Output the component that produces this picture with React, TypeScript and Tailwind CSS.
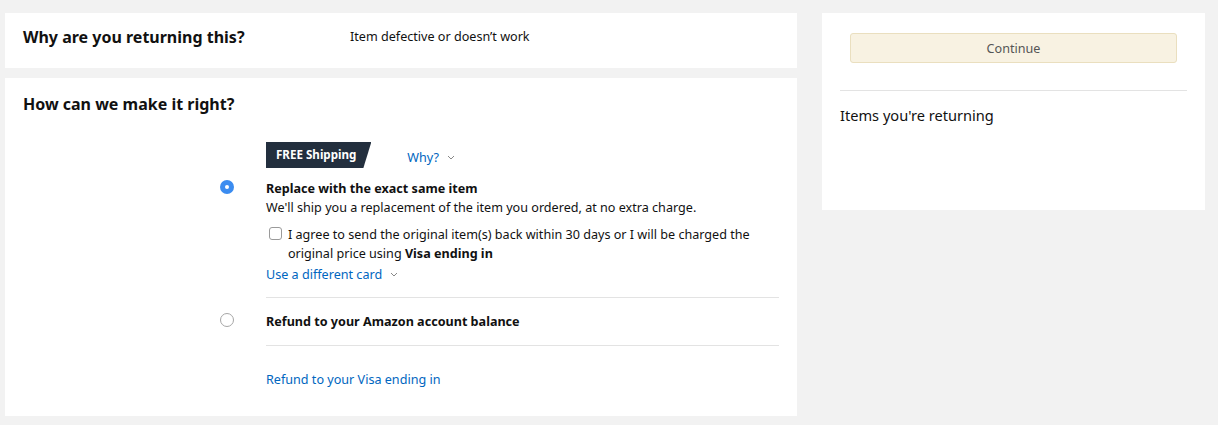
export default function App() {
  return (
    <div
      className="min-h-screen bg-[#f2f2f2] pt-[13px] pl-[5px] text-[#111] text-[12.6px] leading-[19px]"
      style={{ fontFamily: '"Noto Sans", Arial, sans-serif' }}
    >
      <div className="flex gap-[25px]">
        <LeftColumn />
        <RightPanel />
      </div>
    </div>
  );
}

function Chevron() {
  return (
    <svg width="8" height="5" viewBox="0 0 8 5" className="ml-[8px] inline-block">
      <path d="M1 1 L4 4 L7 1" fill="none" stroke="#888" strokeWidth="1" />
    </svg>
  );
}

function LeftColumn() {
  return (
    <div className="w-[792px] flex flex-col gap-[10px]">
      {/* Reason */}
      <div className="bg-white h-[55px] px-[18px] pt-[12px] flex items-start">
        <h2 className="w-[327px] text-[16px] font-bold leading-[24px]">Why are you returning this?</h2>
        <span className="mt-[2px]">Item defective or doesn&rsquo;t work</span>
      </div>

      {/* Resolution options */}
      <div className="bg-white px-[18px] pt-[14px] pb-[27px]">
        <h2 className="text-[16px] font-bold leading-[24px]">How can we make it right?</h2>

        <div className="ml-[243px] mt-[26px] flex items-center h-[26px]">
          <span
            className="bg-[#232f3e] text-white text-[11.6px] font-bold h-[26px] leading-[26px] pl-[10px] pr-[15px]"
            style={{ clipPath: "polygon(0 0, 100% 0, calc(100% - 8px) 100%, 0 100%)" }}
          >
            FREE Shipping
          </span>
          <a className="text-[#0066c0] ml-[36px] mt-[4px] flex items-center">
            Why?
            <Chevron />
          </a>
        </div>

        {/* Replace option */}
        <div className="flex mt-[11px]">
          <div className="w-[243px] pl-[197px] pt-[1px]">
            <span className="w-[14px] h-[14px] rounded-full bg-[#3b8cf0] flex items-center justify-center">
              <span className="w-[4px] h-[4px] rounded-full bg-white" />
            </span>
          </div>
          <div className="flex-1">
            <div className="font-bold">Replace with the exact same item</div>
            <div>We&apos;ll ship you a replacement of the item you ordered, at no extra charge.</div>
            <label className="flex mt-[8px] pl-[3px]">
              <span className="w-[13px] h-[13px] mt-[2px] shrink-0 rounded-[3px] border border-[#9a9a9a] bg-white" />
              <span className="ml-[6px]">
                I agree to send the original item(s) back within 30 days or I will be charged the
                <br />
                original price using <b>Visa ending in</b>
              </span>
            </label>
            <a className="text-[#0066c0] mt-[2px] flex items-center">
              Use a different card
              <Chevron />
            </a>
            <div className="h-px bg-[#e3e3e3] mt-[13px]" />
          </div>
        </div>

        {/* Refund to balance */}
        <div className="flex mt-[14px]">
          <div className="w-[243px] pl-[197px] pt-[1px]">
            <span className="block w-[14px] h-[14px] rounded-full border border-[#a6a6a6] bg-white" />
          </div>
          <div className="flex-1">
            <div className="font-bold">Refund to your Amazon account balance</div>
            <div className="h-px bg-[#e3e3e3] mt-[14px]" />
          </div>
        </div>

        <div className="ml-[243px] mt-[24px]">
          <a className="text-[#0066c0]">Refund to your Visa ending in</a>
        </div>
      </div>
    </div>
  );
}

function RightPanel() {
  return (
    <div className="w-[383px] h-[197px] bg-white px-[18px] pt-[20px]">
      <div className="px-[10px]">
        <button className="w-full h-[30px] rounded-[3px] border border-[#eadfbf] bg-[#f8f2e2] text-[#555] text-[12.6px]">
          Continue
        </button>
      </div>
      <div className="h-px bg-[#e3e3e3] mt-[27px]" />
      <div className="text-[14.6px] mt-[15px]">Items you&apos;re returning</div>
    </div>
  );
}
